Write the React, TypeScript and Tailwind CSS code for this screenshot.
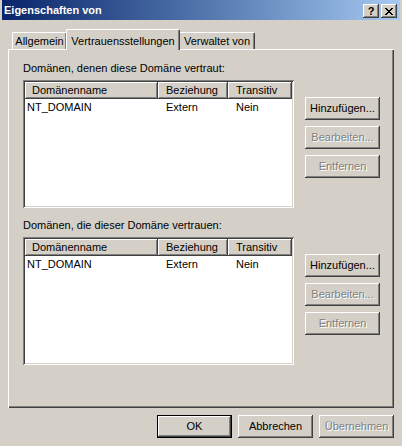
import React from "react";

const raised =
  "bg-[#d4d0c8] shadow-[inset_-1px_-1px_#404040,inset_1px_1px_#ffffff,inset_-2px_-2px_#808080]";

const Btn = ({ label, disabled, isDefault }: { label: string; disabled?: boolean; isDefault?: boolean }) => {
  if (isDefault) {
    return (
      <div className="w-[75px] h-[23px] border border-black bg-[#d4d0c8]">
        <div className={`w-full h-full flex items-center justify-center ${raised}`}>{label}</div>
      </div>
    );
  }
  return (
    <div
      className={`w-[75px] h-[23px] flex items-center justify-center ${raised} ${
        disabled ? "text-[#808080] [text-shadow:1px_1px_0_#ffffff]" : "text-black"
      }`}
    >
      {label}
    </div>
  );
};

const TrustList = () => (
  <div className="w-[271px] h-[128px] bg-white shadow-[inset_1px_1px_#808080,inset_-1px_-1px_#ffffff,inset_2px_2px_#404040,inset_-2px_-2px_#d4d0c8] p-[2px]">
    <div className="flex h-[17px]">
      <div className={`w-[133px] h-full flex items-center pl-[7px] ${raised}`}>Domänenname</div>
      <div className={`w-[70px] h-full flex items-center pl-[8px] ${raised}`}>Beziehung</div>
      <div className={`w-[64px] h-full flex items-center pl-[8px] ${raised}`}>Transitiv</div>
    </div>
    <div className="flex h-[14px] items-center mt-[1px]">
      <div className="w-[133px] pl-[2px]">NT_DOMAIN</div>
      <div className="w-[70px] pl-[8px]">Extern</div>
      <div className="w-[64px] pl-[8px]">Nein</div>
    </div>
  </div>
);

const Group = ({ title }: { title: string }) => (
  <div>
    <div className="h-[13px] leading-[13px]">{title}</div>
    <div className="flex mt-[5px]">
      <TrustList />
      <div className="ml-[11px] pt-[17px] flex flex-col gap-[6px]">
        <Btn label="Hinzufügen..." />
        <Btn label="Bearbeiten..." disabled />
        <Btn label="Entfernen" disabled />
      </div>
    </div>
  </div>
);

export default function App() {
  return (
    <div className="w-[402px] h-[446px] bg-[#d4d0c8] px-[2px] flex flex-col text-[11px] text-black font-['Liberation_Sans',Arial,sans-serif] overflow-hidden">
      <div className="h-[20px] shrink-0 flex items-center justify-between pl-[2px] pr-[3px] bg-gradient-to-r from-[#0a246a] to-[#a6caf0]">
        <span className="text-white font-bold">Eigenschaften von</span>
        <div className="flex gap-[2px] mt-[2px]">
          <div className={`w-[16px] h-[14px] flex items-center justify-center font-bold text-[11px] leading-none ${raised}`}>?</div>
          <div className={`w-[16px] h-[14px] flex items-center justify-center ${raised}`}>
            <svg width="8" height="7" viewBox="0 0 8 7" shapeRendering="crispEdges">
              <path d="M0 0h2v1h-2zM6 0h2v1h-2zM1 1h2v1h-2zM5 1h2v1h-2zM2 2h4v1h-4zM3 3h2v1h-2zM2 4h4v1h-4zM1 5h2v1h-2zM5 5h2v1h-2zM0 6h2v1h-2zM6 6h2v1h-2z" fill="#000" />
            </svg>
          </div>
        </div>
      </div>

      <div className="flex-1 px-[6px] pt-[9px] flex flex-col">
        <div className="flex items-end h-[20px] pl-[4px]">
          <div className="w-[54px] h-[17px] flex items-center justify-center border-l border-t border-white rounded-tl-[2px] shadow-[inset_-1px_0_#808080]">
            Allgemein
          </div>
          <div className="relative z-10 -mb-px w-[114px] h-[21px] bg-[#d4d0c8] flex items-start pt-[3px] justify-center border-l border-t border-white rounded-t-[2px] shadow-[inset_-1px_0_#808080] border-r border-r-[#404040]">
            Vertrauensstellungen
          </div>
          <div className="w-[75px] h-[17px] flex items-center justify-center border-t border-white rounded-tr-[2px] border-r border-r-[#404040] shadow-[inset_-1px_0_#808080]">
            Verwaltet von
          </div>
        </div>

        <div className="h-[359px] shadow-[inset_1px_1px_#ffffff,inset_-1px_-1px_#404040,inset_-2px_-2px_#808080] pl-[15px] pt-[13px] flex flex-col gap-[11px]">
          <Group title="Domänen, denen diese Domäne vertraut:" />
          <Group title="Domänen, die dieser Domäne vertrauen:" />
        </div>

        <div className="flex justify-end gap-[6px] mt-[7px]">
          <Btn label="OK" isDefault />
          <Btn label="Abbrechen" />
          <Btn label="Übernehmen" disabled />
        </div>
      </div>
    </div>
  );
}
